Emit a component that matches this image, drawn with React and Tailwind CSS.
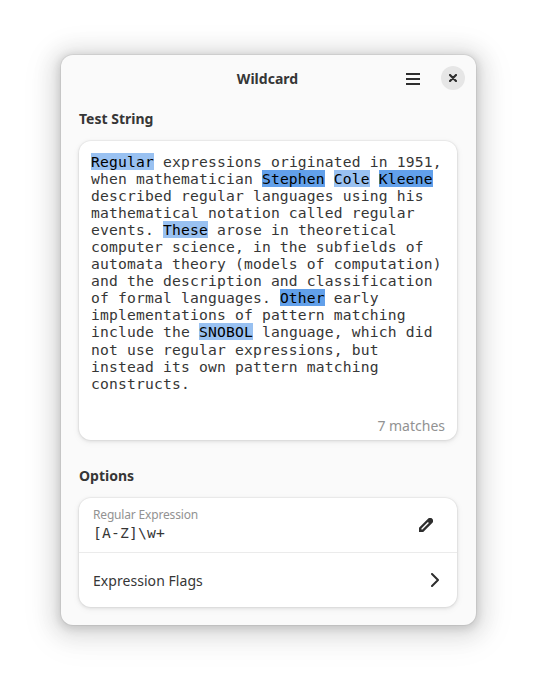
const lines = [
  [['Regular', 1], [' expressions originated in 1951,']],
  [['when mathematician '], ['Stephen', 2], [' '], ['Cole', 1], [' '], ['Kleene', 2]],
  [['described regular languages using his']],
  [['mathematical notation called regular']],
  [['events. '], ['These', 1], [' arose in theoretical']],
  [['computer science, in the subfields of']],
  [['automata theory (models of computation)']],
  [['and the description and classification']],
  [['of formal languages. '], ['Other', 2], [' early']],
  [['implementations of pattern matching']],
  [['include the '], ['SNOBOL', 1], [' language, which did']],
  [['not use regular expressions, but']],
  [['instead its own pattern matching']],
  [['constructs.']],
];

const marks = {
  1: 'inline-block h-[17px] align-top bg-[#99c1f1] text-black',
  2: 'inline-block h-[17px] align-top bg-[#62a0ea] text-black',
};

const card =
  'rounded-xl bg-white shadow-[0_0_0_1px_rgba(0,0,0,0.03),0_1px_3px_1px_rgba(0,0,0,0.07),0_2px_6px_2px_rgba(0,0,0,0.03)]';
const mono = "font-['DejaVu_Sans_Mono','Liberation_Mono',monospace] text-[14.667px] tracking-[0.17px]";

function Header() {
  return (
    <header className="flex h-[47px] items-center pr-[11px]">
      <div className="w-[73px]" />
      <h1 className="flex-1 text-center text-[14px] font-bold tracking-[0.02px]">Wildcard</h1>
      <button className="flex h-6 w-6 items-center justify-center" aria-label="Menu">
        <svg width="14" height="12" viewBox="0 0 14 12" fill="#2e2e2e" shapeRendering="crispEdges">
          <path d="M0 0h14v2H0zM0 5h14v2H0zM0 10h14v2H0z" />
        </svg>
      </button>
      <button className="-mt-px ml-4 flex h-6 w-6 items-center justify-center rounded-full bg-[#e6e6e6]" aria-label="Close">
        <svg width="8" height="8" viewBox="0 0 8 8" fill="none" stroke="#2e2e2e" strokeWidth="2.2" strokeLinecap="round">
          <path d="M1 1l6 6M7 1L1 7" />
        </svg>
      </button>
    </header>
  );
}

export default function App() {
  return (
    <div className="flex h-[692px] w-[537px] justify-center overflow-hidden bg-white pt-[55px] font-['Noto_Sans','Open_Sans',sans-serif] text-[#363636]">
      <main className="h-[570px] w-[415px] rounded-xl bg-[#fafafa] shadow-[0_2px_8px_2px_rgba(0,0,0,0.13),0_3px_20px_10px_rgba(0,0,0,0.09),0_6px_32px_16px_rgba(0,0,0,0.04),0_0_0_1px_rgba(0,0,0,0.05)]">
        <Header />
        <div className="pr-[19px] pl-[18px]">
          <h2 className="mt-[7px] h-5 text-[14px] leading-5 font-bold">Test String</h2>
          <section className={`mt-3 flex h-[299px] flex-col justify-between px-3 pt-3 ${card}`}>
            <div className={`leading-[17.05px] whitespace-pre ${mono}`}>
              {lines.map((parts, i) => (
                <div key={i} className="h-[17.05px]">
                  {parts.map(([text, mark], j) => (
                    <span key={j} className={marks[mark]}>{text}</span>
                  ))}
                </div>
              ))}
            </div>
            <p className="mb-1 text-right text-[14px] leading-5 text-[#929292]">7 matches</p>
          </section>
          <h2 className="mt-[26px] h-5 text-[14px] leading-5 font-bold">Options</h2>
          <section className={`mt-3 ${card}`}>
            <div className="flex h-[55px] items-center justify-between border-b border-[#ebebeb] pr-6 pl-[14px]">
              <div className="pb-0.5">
                <p className="text-[12px] leading-[17px] tracking-[-0.17px] text-[#929292]">Regular Expression</p>
                <p className={`leading-5 ${mono}`}>[A-Z]\w+</p>
              </div>
              <svg width="14" height="14" viewBox="0 0 14 14" fill="#2e2e2e" fillRule="evenodd">
                <path d="M0 14V9.800L9 .8a2.800 2.800 0 0 1 4.200 4.200L4.200 14zM2.400 10.600v1h1L9.900 5.100 8.900 4.100z" />
              </svg>
            </div>
            <div className="flex h-[54px] items-center justify-between pr-[18px] pl-[14px]">
              <p className="mt-0.5 text-[14px] leading-5 tracking-[0.05px]">Expression Flags</p>
              <svg width="8" height="14" viewBox="0 0 8 14" fill="none" stroke="#2e2e2e" strokeWidth="2" strokeLinecap="round" strokeLinejoin="round">
                <path d="M1 1l6 6-6 6" />
              </svg>
            </div>
          </section>
        </div>
      </main>
    </div>
  );
}
